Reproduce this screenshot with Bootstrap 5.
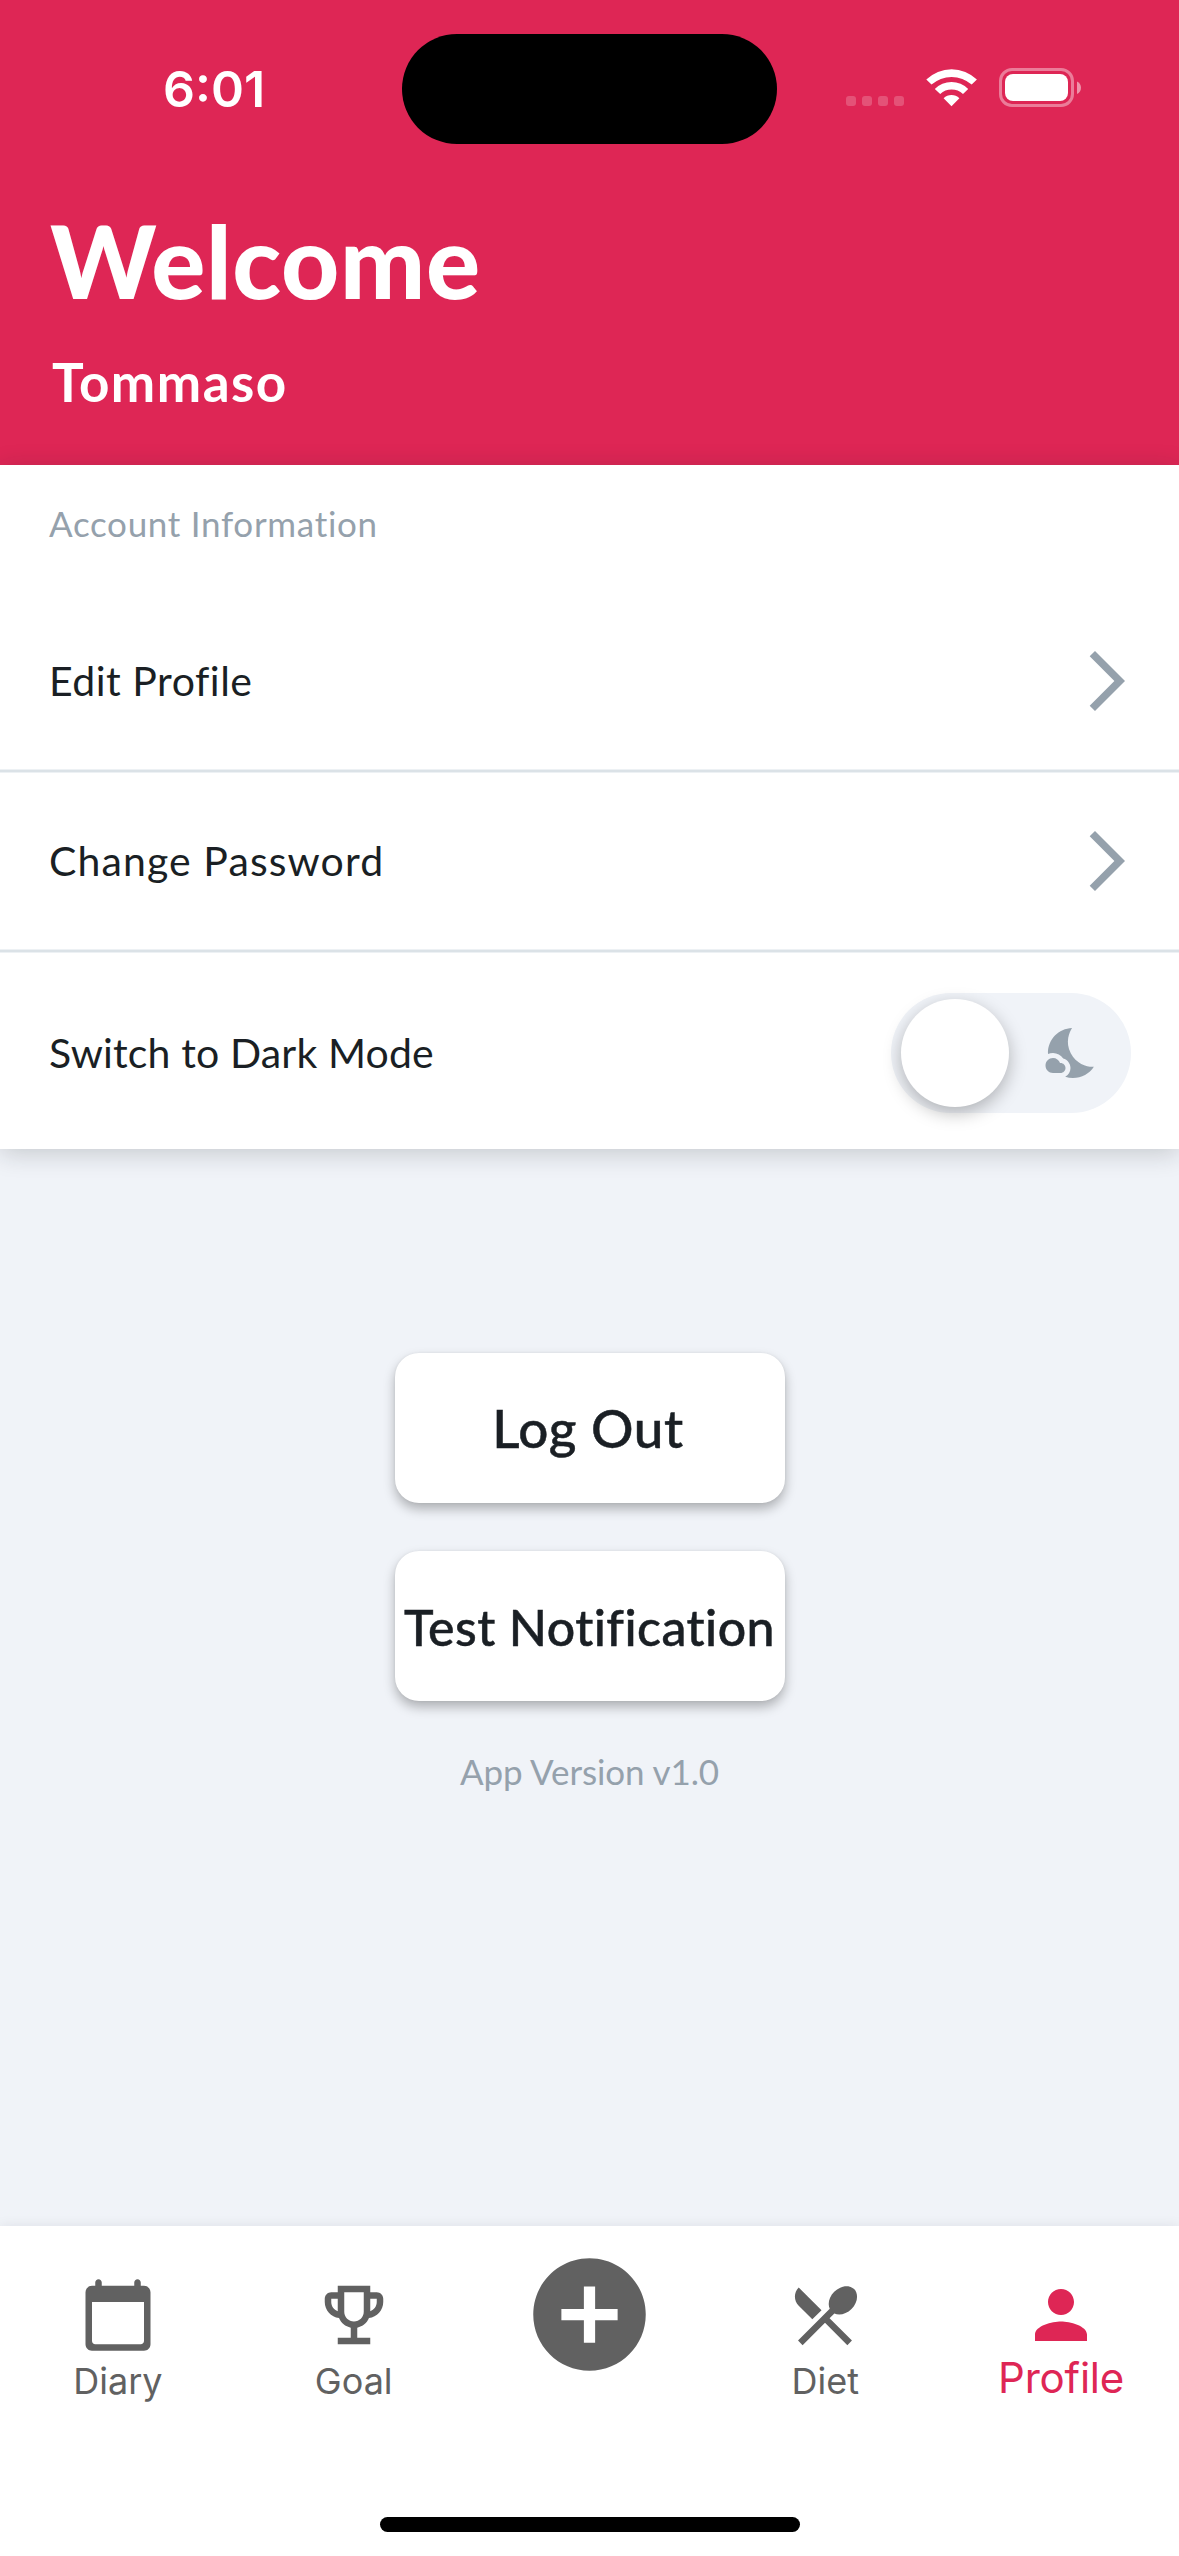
<!DOCTYPE html>
<html lang="en">
<head>
<meta charset="utf-8">
<meta name="viewport" content="width=device-width, initial-scale=1">
<title>Profile</title>
<link href="https://cdn.jsdelivr.net/npm/bootstrap@5.3.0/dist/css/bootstrap.min.css" rel="stylesheet">
<style>
:root{--brand:#de2655;--ink:#1a1f24;--muted:#95a1ac;--canvas:#f0f3f8;--rule:#dbe2e7;--nav:#616161}
body{width:1179px;height:2556px;overflow:hidden;background:var(--canvas);color:var(--ink);font-family:Lato,"Open Sans",sans-serif;line-height:1.2;font-size:41px}
span,h1,h2{white-space:nowrap}
.top-area,.panel,.tabs{flex:none}
.top-area{height:465px;background:var(--brand)}
.status{height:200px;padding:34px 96px 0 163px;font-family:Inter,sans-serif}
.clock{font-size:50px;font-weight:600;width:239px;line-height:110px}
.island{width:375px;height:110px;background:#000}
.greet{font-size:101px;font-weight:900;line-height:120px;padding-left:50px;letter-spacing:.7px}
.who{font-size:53px;font-weight:700;line-height:64px;padding:0 0 0 52px;margin-top:30px;letter-spacing:1.5px}
.panel{box-shadow:0 4px 24px rgba(26,31,36,.2)}
.sec{height:128px;padding:37px 49px 0;font-size:35px;line-height:42px;color:var(--muted);letter-spacing:.7px}
.line-row{height:176px;padding:0 36px 0 49px}
.rule{height:4px;background:var(--rule);border-top:1px solid #edf1f4;border-bottom:1px solid #edf1f4}
.mode-row{padding:40px 48px 36px 49px}
.ls-edit{letter-spacing:.5px}
.ls-change{letter-spacing:1.1px}
.ls-mode{letter-spacing:.15px}
.mode{width:240px;height:120px;background:var(--canvas);padding:0 28px 0 10px}
.knob{width:108px;height:108px;background:#fff;box-shadow:0 6px 18px rgba(0,0,0,.27)}
.hint-icon{color:var(--muted)}
.act{width:390px;height:150px;border-radius:24px;background:#fff;box-shadow:0 6px 12px rgba(0,0,0,.28),0 0 3px rgba(0,0,0,.06);font-weight:500;color:var(--ink);-webkit-text-stroke:.5px var(--ink)}
.act-out{font-size:53px;letter-spacing:.6px;padding:0 3px 0 0}
.act-test{font-size:50px;letter-spacing:.45px;padding:1px 0 0}
.actions{padding-top:204px;gap:48px}
.ver{font-size:35px;line-height:42px;color:var(--muted);margin-top:1px;letter-spacing:-.1px}
.tabs{height:330px;box-shadow:0 0 12px rgba(26,31,36,.08);color:var(--nav);font-family:Inter,sans-serif;font-size:36px}
.tab-item{padding-top:50px}
.tab-item span{line-height:44px;margin-top:5px}
.tab-item.on span{margin-top:2px;letter-spacing:-.2px}
.on{color:var(--brand);font-size:42px}
.tab-add{padding-top:21px}
.home{width:420px;height:15px;background:#000;margin-bottom:24px}
svg{display:block;fill:currentColor;flex:none}
</style>
</head>
<body class="d-flex flex-column">
<header class="top-area text-white">
  <div class="status d-flex align-items-start">
    <span class="clock">6:01</span>
    <div class="island rounded-pill"></div>
    <svg class="ms-auto" width="238" height="110" viewBox="845 34 238 110">
      <g opacity=".2"><rect x="846" y="96" width="10" height="10" rx="3"/><rect x="862" y="96" width="10" height="10" rx="3"/><rect x="878" y="96" width="10" height="10" rx="3"/><rect x="894" y="96" width="10" height="10" rx="3"/></g>
      <path d="M926.3 79.6A36.2 36.2 0 0 1 976.9 79.6L971.7 84.6A30.4 30.4 0 0 0 931.5 84.6ZM934.8 89A23.4 23.4 0 0 1 968.2 89L963 94A17 17 0 0 0 940.2 94ZM943.6 98.2A11.5 11.5 0 0 1 959.4 98.2L951.5 106.3Z"/>
      <rect x="1000.5" y="69.500" width="72" height="36" rx="11.5" fill="none" stroke="#fff" stroke-width="3" opacity=".4"/>
      <rect x="1005" y="74" width="63" height="27" rx="8"/>
      <path opacity=".5" d="M1077 81.5C1079.500 82.500 1081 84.800 1081 87.800C1081 90.700 1079.500 93 1077 94Z"/>
    </svg>
  </div>
  <h1 class="greet m-0">Welcome</h1>
  <h2 class="who mb-0">Tommaso</h2>
</header>
<section class="panel bg-white">
  <div class="sec">Account Information</div>
  <div class="line-row d-flex align-items-center justify-content-between">
    <span class="ls-edit">Edit Profile</span>
    <svg class="hint-icon" width="72" height="72" viewBox="0 0 24 24"><path d="M6.230 20.230L8 22l10-10L8 2 6.230 3.770 14.460 12z"/></svg>
  </div>
  <div class="rule"></div>
  <div class="line-row d-flex align-items-center justify-content-between">
    <span class="ls-change">Change Password</span>
    <svg class="hint-icon" width="72" height="72" viewBox="0 0 24 24"><path d="M6.230 20.230L8 22l10-10L8 2 6.230 3.770 14.460 12z"/></svg>
  </div>
  <div class="rule"></div>
  <div class="mode-row d-flex align-items-center justify-content-between">
    <span class="ls-mode">Switch to Dark Mode</span>
    <div class="mode rounded-pill d-flex align-items-center justify-content-between">
      <div class="knob rounded-circle"></div>
      <svg class="hint-icon" width="60" height="60" viewBox="0 0 24 24"><path d="M11.100 12.080c-2.330-4.510-.5-8.480.53-10.070C6.270 2.200 1.980 6.590 1.980 12c0 .14.02.28.02.42.62-.27 1.290-.42 2-.42 1.660 0 3.180.83 4.100 2.150 1.670.48 2.900 2.020 2.900 3.850 0 1.520-.87 2.830-2.120 3.510.98.32 2.030.5 3.110.5 3.500 0 6.580-1.800 8.370-4.520-2.360.23-6.980-.97-9.260-5.410z"/><path d="M7 16h-.18C6.400 14.840 5.300 14 4 14c-1.660 0-3 1.340-3 3s1.340 3 3 3h3c1.100 0 2-.9 2-2s-.9-2-2-2z"/></svg>
    </div>
  </div>
</section>
<main class="actions flex-grow-1 d-flex flex-column align-items-center">
  <button type="button" class="act act-out border-0">Log Out</button>
  <button type="button" class="act act-test border-0 text-nowrap">Test Notification</button>
  <span class="ver">App Version v1.0</span>
</main>
<nav class="tabs bg-white d-flex flex-column">
  <div class="row g-0 row-cols-5 flex-grow-1">
    <div class="tab-item col d-flex flex-column align-items-center"><svg width="78" height="78" viewBox="0 0 24 24"><path fill-rule="evenodd" d="M20 3h-1V2c0-.55-.45-1-1-1s-1 .45-1 1v1H7V2c0-.55-.45-1-1-1s-1 .45-1 1v1H4c-1.100 0-2 .9-2 2v16c0 1.100.9 2 2 2h16c1.100 0 2-.9 2-2V5c0-1.100-.9-2-2-2zm-1 18H5c-.55 0-1-.45-1-1V8h16v12c0 .55-.45 1-1 1z"/></svg><span>Diary</span></div>
    <div class="tab-item col d-flex flex-column align-items-center"><svg width="78" height="78" viewBox="0 0 24 24"><path fill-rule="evenodd" d="M19 5h-2V3H7v2H5C3.900 5 3 5.900 3 7v1c0 2.550 1.920 4.630 4.390 4.940c.63 1.500 1.980 2.630 3.610 2.960V19H7v2h10v-2h-4v-3.100c1.630-.33 2.980-1.460 3.610-2.960C19.080 12.630 21 10.550 21 8V7C21 5.900 20.100 5 19 5zM5 8V7h2v3.820C5.840 10.400 5 9.300 5 8zM12 14c-1.650 0-3-1.350-3-3V5h6v6C15 12.650 13.650 14 12 14zM19 8c0 1.300-.84 2.400-2 2.820V7h2V8z"/></svg><span>Goal</span></div>
    <div class="tab-add col d-flex justify-content-center align-items-start"><svg width="135" height="135" viewBox="0 0 24 24"><path d="M12 2C6.480 2 2 6.480 2 12s4.480 10 10 10 10-4.480 10-10S17.520 2 12 2zm5 11h-4v4h-2v-4H7v-2h4V7h2v4h4v2z"/></svg></div>
    <div class="tab-item col d-flex flex-column align-items-center"><svg width="78" height="78" viewBox="0 0 24 24"><path d="M8.100 13.340l2.830-2.830L3.910 3.500c-1.560 1.560-1.560 4.090 0 5.660l4.190 4.180zm6.780-1.810c1.530.71 3.680.21 5.270-1.380 1.910-1.910 2.280-4.650.81-6.120-1.460-1.460-4.200-1.100-6.120.81-1.590 1.590-2.090 3.740-1.380 5.270L3.700 19.870l1.410 1.410L12 14.410l6.880 6.880 1.410-1.410L13.410 13l1.470-1.470z"/></svg><span>Diet</span></div>
    <div class="tab-item on col d-flex flex-column align-items-center"><svg width="78" height="78" viewBox="0 0 24 24"><path d="M12 12c2.210 0 4-1.790 4-4s-1.790-4-4-4-4 1.790-4 4 1.790 4 4 4zm0 2c-2.670 0-8 1.340-8 4v2h16v-2c0-2.660-5.330-4-8-4z"/></svg><span>Profile</span></div>
  </div>
  <div class="home rounded-pill mx-auto"></div>
</nav>
<script src="https://cdn.jsdelivr.net/npm/bootstrap@5.3.0/dist/js/bootstrap.bundle.min.js"></script>
</body>
</html>
